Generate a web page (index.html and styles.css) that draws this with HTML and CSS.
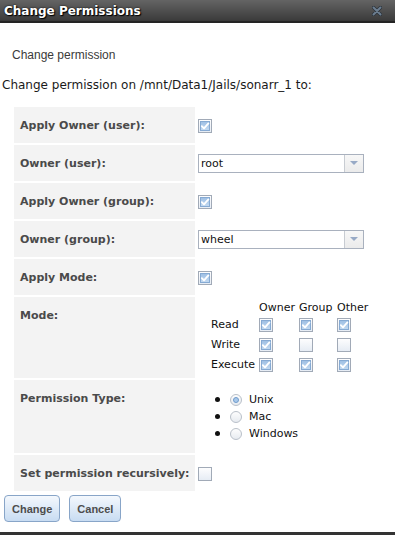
FILE: index.html
```html
<!DOCTYPE html>
<html>
<head>
<meta charset="utf-8">
<link rel="stylesheet" href="styles.css">
</head>
<body>
<div class="titlebar">
  <span class="title">Change Permissions</span>
  <svg class="close" viewBox="0 0 10 10" width="10" height="10">
    <path d="M1.5 1.5 L8.5 8.5 M8.5 1.5 L1.5 8.5" stroke="#2b333b" stroke-width="3.4" stroke-linecap="round"/>
    <path d="M1.5 1.5 L8.5 8.5 M8.5 1.5 L1.5 8.5" stroke="#6c7e90" stroke-width="2" stroke-linecap="round"/>
  </svg>
</div>
<div class="content">
  <p class="heading">Change permission</p>
  <p class="intro">Change permission on /mnt/Data1/Jails/sonarr_1 to:</p>
  <table class="form">
    <colgroup><col class="c-label"><col class="c-value"></colgroup>
    <tr>
      <td class="label">Apply Owner (user):</td>
      <td class="value"><span class="cb on"><svg viewBox="0 0 10 10"><path d="M1.8 5.2 L4 7.4 L8.4 2.4"/></svg></span></td>
    </tr>
    <tr>
      <td class="label">Owner (user):</td>
      <td class="value"><div class="select"><span class="val">root</span><span class="arrow"><span class="tri"></span></span></div></td>
    </tr>
    <tr>
      <td class="label">Apply Owner (group):</td>
      <td class="value"><span class="cb on"><svg viewBox="0 0 10 10"><path d="M1.8 5.2 L4 7.4 L8.4 2.4"/></svg></span></td>
    </tr>
    <tr>
      <td class="label">Owner (group):</td>
      <td class="value"><div class="select"><span class="val">wheel</span><span class="arrow"><span class="tri"></span></span></div></td>
    </tr>
    <tr>
      <td class="label">Apply Mode:</td>
      <td class="value"><span class="cb on"><svg viewBox="0 0 10 10"><path d="M1.8 5.2 L4 7.4 L8.4 2.4"/></svg></span></td>
    </tr>
    <tr>
      <td class="label">Mode:</td>
      <td class="value top mode-cell">
        <div class="mode">
          <span></span><span class="hd">Owner</span><span class="hd">Group</span><span class="hd">Other</span>
          <span class="rl">Read</span>
          <span class="cb on"><svg viewBox="0 0 10 10"><path d="M1.8 5.2 L4 7.4 L8.4 2.4"/></svg></span>
          <span class="cb on"><svg viewBox="0 0 10 10"><path d="M1.8 5.2 L4 7.4 L8.4 2.4"/></svg></span>
          <span class="cb on"><svg viewBox="0 0 10 10"><path d="M1.8 5.2 L4 7.4 L8.4 2.4"/></svg></span>
          <span class="rl">Write</span>
          <span class="cb on"><svg viewBox="0 0 10 10"><path d="M1.8 5.2 L4 7.4 L8.4 2.4"/></svg></span>
          <span class="cb"></span>
          <span class="cb"></span>
          <span class="rl">Execute</span>
          <span class="cb on"><svg viewBox="0 0 10 10"><path d="M1.8 5.2 L4 7.4 L8.4 2.4"/></svg></span>
          <span class="cb on"><svg viewBox="0 0 10 10"><path d="M1.8 5.2 L4 7.4 L8.4 2.4"/></svg></span>
          <span class="cb on"><svg viewBox="0 0 10 10"><path d="M1.8 5.2 L4 7.4 L8.4 2.4"/></svg></span>
        </div>
      </td>
    </tr>
    <tr>
      <td class="label">Permission Type:</td>
      <td class="value top">
        <ul class="radios">
          <li><span class="dot"></span><span class="radio on"></span>Unix</li>
          <li><span class="dot"></span><span class="radio"></span>Mac</li>
          <li><span class="dot"></span><span class="radio"></span>Windows</li>
        </ul>
      </td>
    </tr>
    <tr>
      <td class="label">Set permission recursively:</td>
      <td class="value"><span class="cb"></span></td>
    </tr>
  </table>
  <div class="buttons">
    <button class="btn">Change</button>
    <button class="btn">Cancel</button>
  </div>
</div>
<div class="edge"></div>
</body>
</html>
```
FILE: styles.css
```css
html, body {
  margin: 0;
  padding: 0;
}
body {
  width: 395px;
  height: 535px;
  background: #fff;
  display: flex;
  flex-direction: column;
  font-family: "DejaVu Sans", Verdana, sans-serif;
  overflow: hidden;
}
.titlebar {
  height: 21px;
  border-bottom: 2px solid #242424;
  background: linear-gradient(#646464, #3a3a3a);
  display: flex;
  align-items: center;
  justify-content: space-between;
  padding: 0 13px 0 4px;
}
.title {
  color: #fff;
  font-weight: bold;
  font-size: 12px;
  text-shadow: 0 0 2px #000, 1px 1px 1px #000;
  line-height: 14px;
}
.close {
  display: block;
}
.content {
  display: flex;
  flex-direction: column;
}
.heading {
  margin: 25px 0 0 12px;
  font-family: "Liberation Sans", Arial, sans-serif;
  font-size: 12px;
  line-height: 14px;
  color: #3a3a3a;
}
.intro {
  margin: 16px 0 0 2px;
  font-size: 12px;
  line-height: 14px;
  color: #1a1a1a;
}
.form {
  margin: 13px 0 0 12px;
  border-spacing: 2px;
  border-collapse: separate;
  table-layout: fixed;
  width: 367px;
}
.c-label {
  width: 181px;
}
.c-value {
  width: 182px;
}
.form td {
  padding: 0;
}
.form td.label {
  padding: 12px 0 10px 6px;
  background: #f3f3f3;
  font-weight: bold;
  font-size: 11px;
  line-height: 14px;
  color: #4a4a4a;
  vertical-align: top;
  white-space: nowrap;
  overflow: visible;
}
.form td.value {
  vertical-align: middle;
  padding: 0 1px;
}
.form td.top {
  vertical-align: top;
}
.cb {
  width: 14px;
  height: 14px;
  box-sizing: border-box;
  border: 1px solid #a1aab7;
  background: linear-gradient(#fdfdfe, #e6ecf4);
  padding: 1px;
  display: inline-block;
  vertical-align: middle;
}
.form td.value > .cb {
  display: block;
  margin-top: 2px;
}
.cb svg {
  display: block;
  width: 10px;
  height: 10px;
  background: linear-gradient(#9bbde3, #c6dcf2);
  box-shadow: inset 0 0 0 1px #86aad3;
}
.cb svg path {
  fill: none;
  stroke: #fff;
  stroke-width: 1.8;
  stroke-linecap: round;
  stroke-linejoin: round;
}
.select {
  display: flex;
  width: 166px;
  height: 19px;
  box-sizing: border-box;
  border: 1px solid #a9b1be;
  background: #fff;
}
.select .val {
  flex: 1;
  padding-left: 2px;
  font-size: 11px;
  line-height: 17px;
  color: #111;
}
.select .arrow {
  width: 18px;
  border-left: 1px solid #c8ccd2;
  background: linear-gradient(#f7f7f7, #ebebeb);
  display: flex;
  align-items: center;
  justify-content: center;
}
.tri {
  width: 0;
  height: 0;
  border-left: 4px solid transparent;
  border-right: 4px solid transparent;
  border-top: 4px solid #98aac6;
}
.form td.mode-cell {
  padding: 4px 1px 3px;
}
.mode {
  margin-left: 13px;
  display: grid;
  grid-template-columns: 48px 40px 38px auto;
  grid-template-rows: 14px 20px 20px 20px;
  align-items: center;
  font-size: 11px;
  color: #111;
}
.mode .hd {
  line-height: 14px;
}
.mode .rl {
  line-height: 20px;
}
.radios {
  list-style: none;
  margin: 0;
  padding: 11px 0 11px 17px;
  font-size: 11px;
  color: #111;
}
.radios li {
  display: flex;
  align-items: center;
  height: 17px;
}
.dot {
  width: 5px;
  height: 5px;
  border-radius: 50%;
  background: #111;
  margin-right: 10px;
}
.radio {
  width: 12px;
  height: 12px;
  box-sizing: border-box;
  border-radius: 50%;
  border: 1px solid #b9c0c9;
  background: linear-gradient(#fdfdfd, #e7ebf0);
  margin-right: 7px;
  display: flex;
  align-items: center;
  justify-content: center;
}
.radio.on::after {
  content: "";
  width: 6px;
  height: 6px;
  box-sizing: border-box;
  border-radius: 50%;
  background: #a9c9ea;
  border: 1px solid #6f9bcc;
}
.buttons {
  display: flex;
  gap: 9px;
  margin: 2px 0 0 4px;
}
.btn {
  height: 27px;
  padding: 0 7px;
  border: 1px solid #88a5c8;
  border-radius: 4px;
  background: linear-gradient(#f4f8fd, #c8dcf2);
  font-family: "Liberation Sans", Arial, sans-serif;
  font-weight: bold;
  font-size: 11px;
  color: #4d4d4d;
}
.edge {
  margin-top: auto;
  height: 3px;
  background: #333;
}
```
